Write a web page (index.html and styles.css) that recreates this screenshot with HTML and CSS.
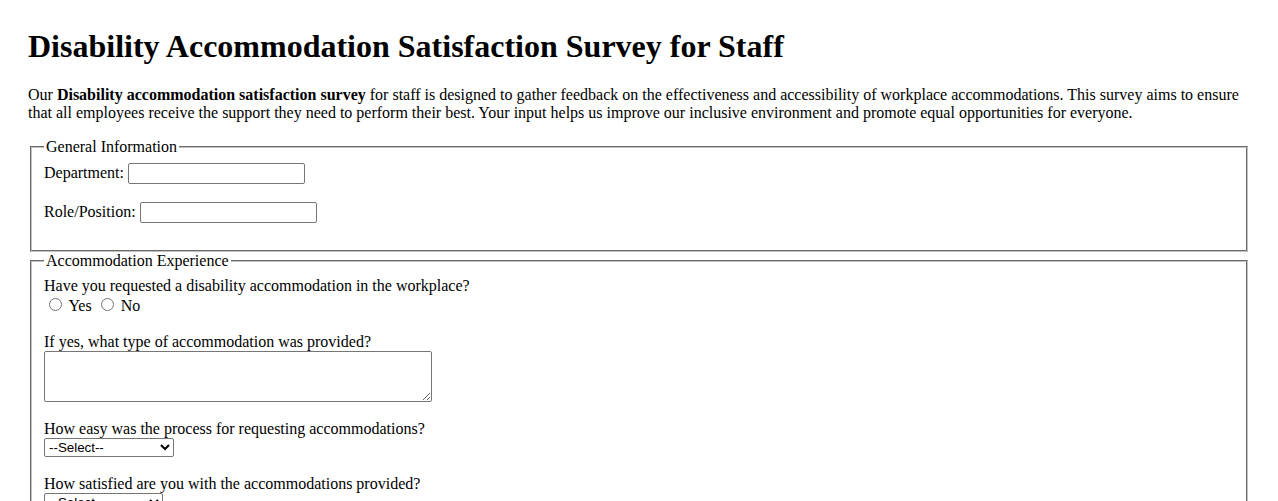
FILE: index.html
```html
<!DOCTYPE html>
<html lang="en">
<head>
<meta charset="utf-8">
<title>Disability Accommodation Satisfaction Survey for Staff</title>
<link rel="stylesheet" href="styles.css">
</head>
<body>
<div class="page">
  <h1 class="title">Disability Accommodation Satisfaction Survey for Staff</h1>
  <p class="intro">Our <strong>Disability accommodation satisfaction survey</strong> for staff is designed to gather feedback on the effectiveness and accessibility of workplace accommodations. This survey aims to ensure that all employees receive the support they need to perform their best. Your input helps us improve our inclusive environment and promote equal opportunities for everyone.</p>
  <form class="survey">
    <fieldset class="group">
      <legend>General Information</legend>
      <label for="dept">Department:</label> <input type="text" id="dept" class="text-field"><br><br>
      <label for="role">Role/Position:</label> <input type="text" id="role" class="text-field"><br><br>
    </fieldset>
    <fieldset class="group">
      <legend>Accommodation Experience</legend>
      <label>Have you requested a disability accommodation in the workplace?</label><br>
      <input type="radio" name="requested" id="req-yes" value="yes"> <label for="req-yes">Yes</label>
      <input type="radio" name="requested" id="req-no" value="no"> <label for="req-no">No</label><br><br>
      <label for="type">If yes, what type of accommodation was provided?</label><br>
      <textarea id="type" class="long-answer" rows="3"></textarea><br><br>
      <label for="ease">How easy was the process for requesting accommodations?</label><br>
      <select id="ease" class="choice choice-ease">
        <option>--Select--</option>
        <option>Very Easy</option>
        <option>Easy</option>
        <option>Neutral</option>
        <option>Difficult</option>
        <option>Very Difficult</option>
      </select><br><br>
      <label for="sat">How satisfied are you with the accommodations provided?</label><br>
      <select id="sat" class="choice choice-sat">
        <option>--Select--</option>
        <option>Very Satisfied</option>
        <option>Satisfied</option>
        <option>Neutral</option>
        <option>Dissatisfied</option>
      </select><br><br>
    </fieldset>
  </form>
</div>
</body>
</html>
```
FILE: styles.css
```css
html, body {
  margin: 0;
  padding: 0;
  background: #ffffff;
}

body {
  font-family: "Liberation Serif", "Times New Roman", serif;
  font-size: 16px;
  color: #000000;
}

.page {
  padding: 28px 28px 0 28px;
}

.title {
  font-size: 32px;
  font-weight: bold;
  margin: 0 0 21px 0;
}

.intro {
  margin: 0 0 16px 0;
}

.survey {
  margin: 0;
}

.group {
  margin: 0 2px;
  padding: 7px 12px 8.6px;
  border: 2px groove #c0c0c0;
}

.group legend {
  padding: 0 2px;
}

.text-field {
  font-family: "Liberation Sans", Arial, sans-serif;
  font-size: 13.333px;
  width: 177px;
  height: 21px;
  box-sizing: border-box;
  border: 1px solid #767676;
  border-radius: 2px;
  padding: 1px 2px;
}

.long-answer {
  font-family: "Liberation Mono", "Courier New", monospace;
  font-size: 13.333px;
  width: 388px;
  height: 51px;
  box-sizing: border-box;
  border: 1px solid #767676;
  border-radius: 2px;
  padding: 2px;
  vertical-align: top;
}

.choice {
  font-family: "Liberation Sans", Arial, sans-serif;
  font-size: 13.333px;
  height: 19px;
  box-sizing: border-box;
  border: 1px solid #767676;
  border-radius: 2px;
  background: #ffffff;
  color: #000000;
}

.choice-ease {
  width: 130px;
}

.choice-sat {
  width: 119px;
}
```
